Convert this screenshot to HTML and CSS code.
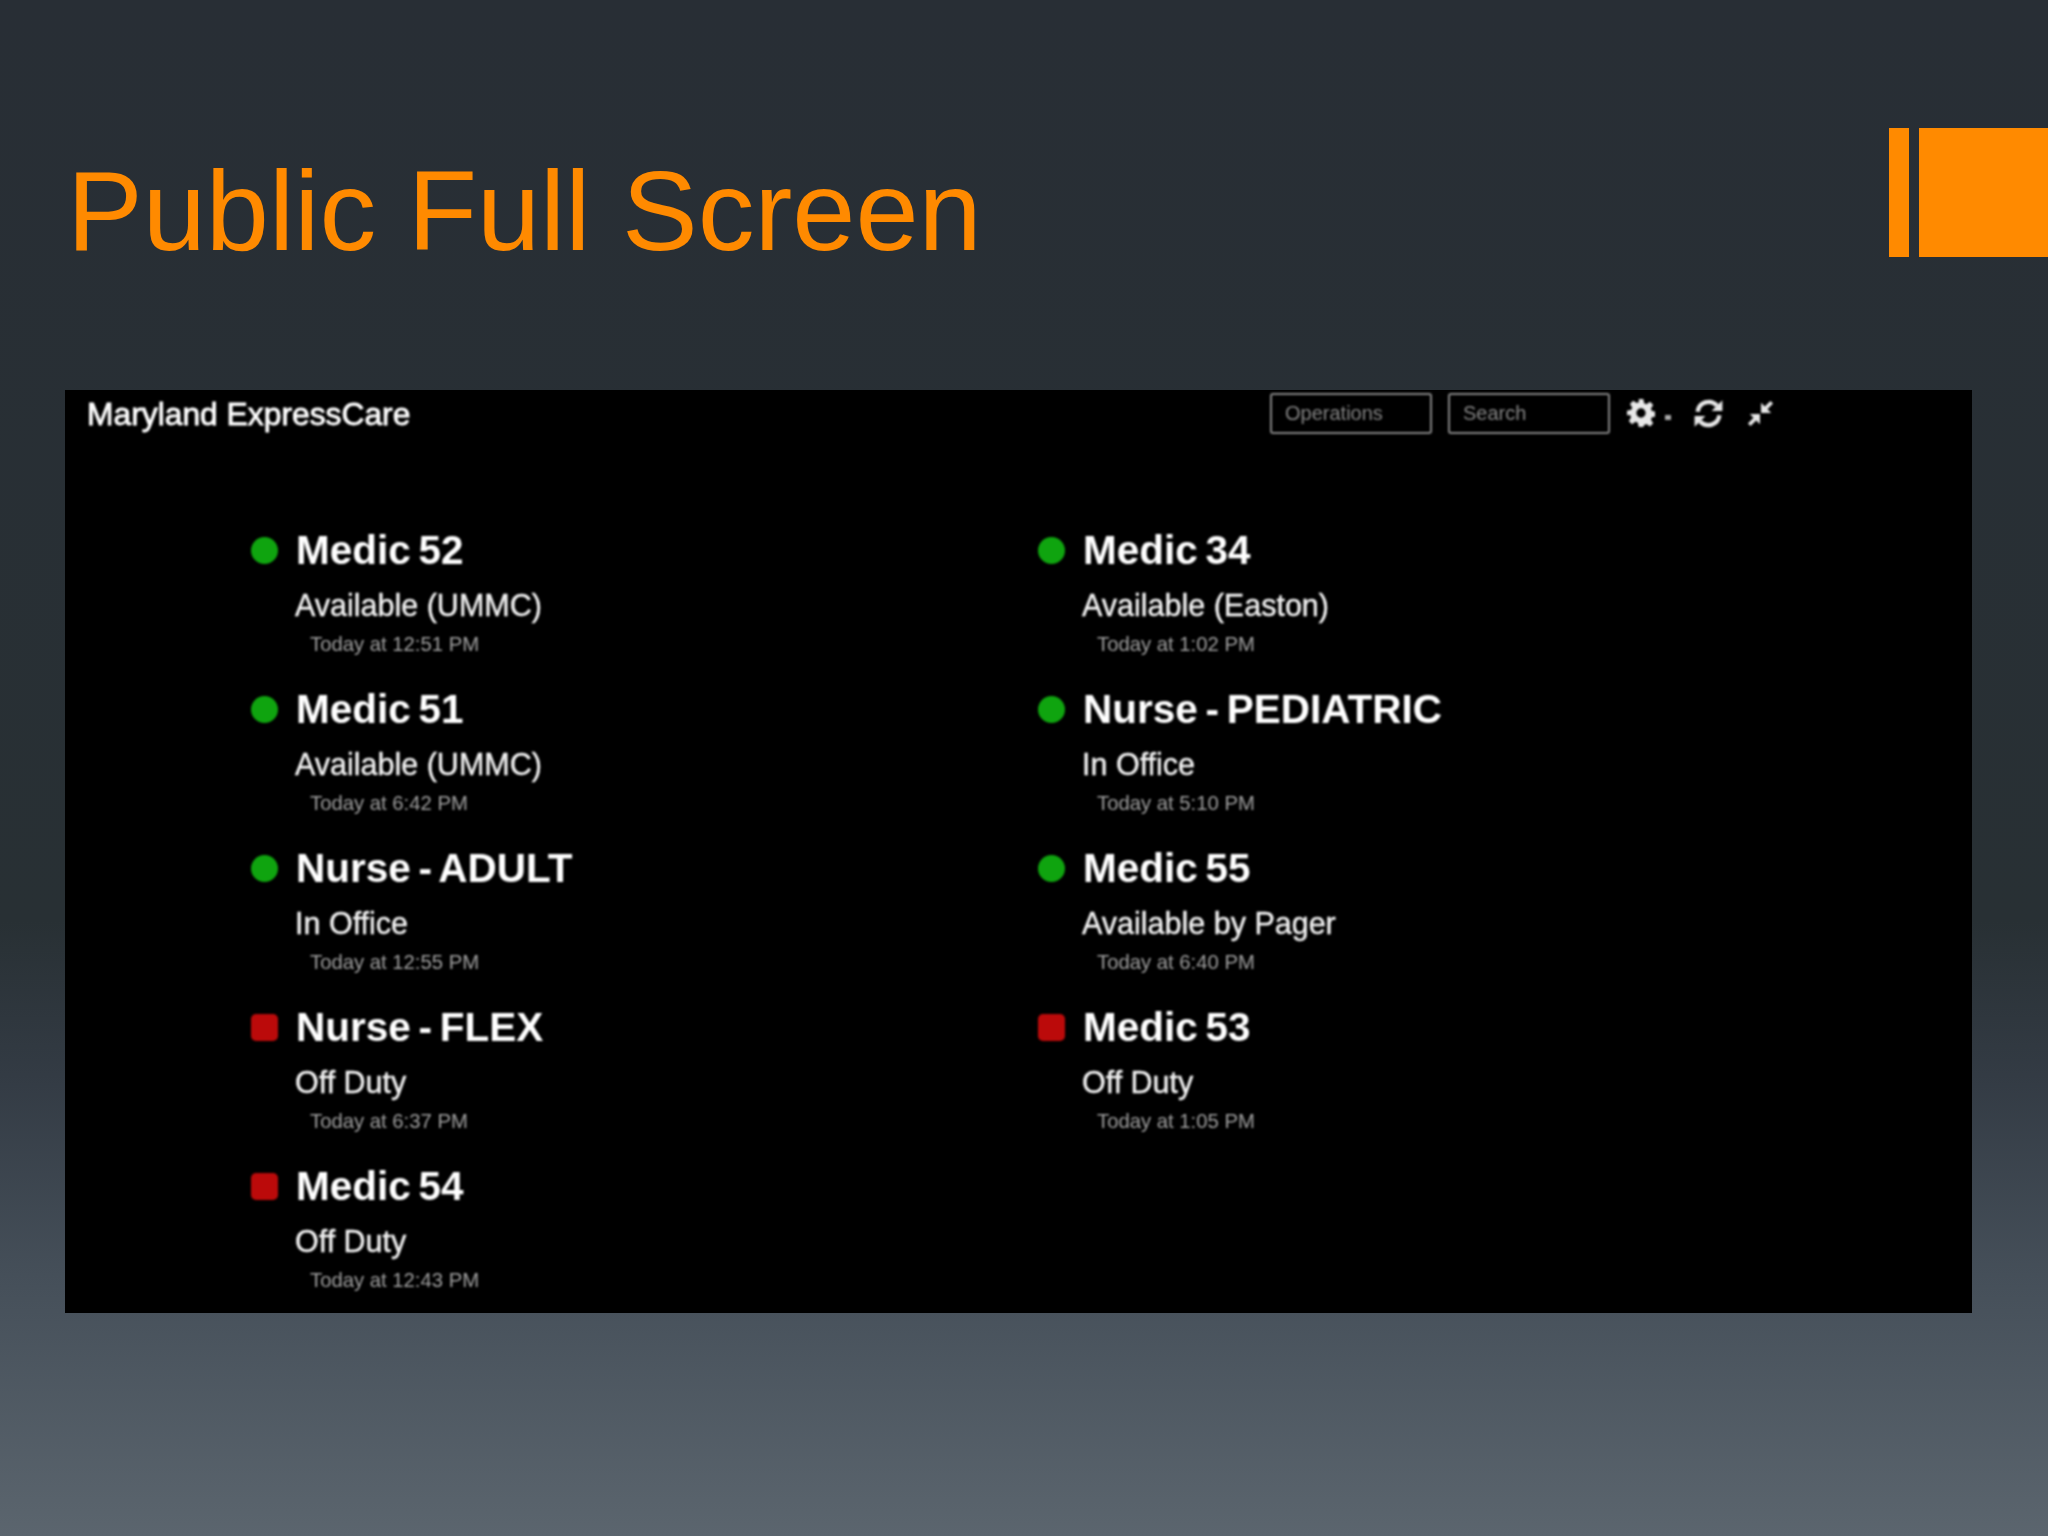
FILE: index.html
```html
<!DOCTYPE html>
<html lang="en">
<head>
  <meta charset="UTF-8" />
  <title>Public Full Screen</title>
  <link rel="stylesheet" href="styles.css">
</head>
<body>
  <header class="slide-head">
    <h1>Public Full Screen</h1>
    <div class="accent">
      <span class="accent-bar"></span>
      <span class="accent-block"></span>
    </div>
  </header>

  <section class="panel">
    <div class="topbar">
      <div class="brand">Maryland ExpressCare</div>
      <div class="tools">
        <div class="field">Operations</div>
        <div class="field">Search</div>
        <svg class="icon icon-gear" viewBox="0 0 24 24">
          <path d="M10 0h4l.7 3.6 2 .8 3-2 2.8 2.8-2 3 .8 2 3.7.8v4l-3.7.7-.8 2 2 3-2.8 2.8-3-2-2 .8L14 24h-4l-.7-3.6-2-.8-3 2-2.8-2.8 2-3-.8-2L0 14v-4l3.7-.8.8-2-2-3 2.8-2.8 3 2 2-.8zM12 8a4 4 0 1 0 0 8 4 4 0 0 0 0-8z" fill-rule="evenodd"/>
        </svg>
        <span class="caret"></span>
        <svg class="icon icon-refresh" viewBox="0 0 24 24">
          <path d="M3 10.5A9.2 9.2 0 0 1 19 5.5M21 13.5A9.2 9.2 0 0 1 5 18.5" fill="none" stroke-width="3.6"/>
          <path d="M23.5 1v9h-9zM.5 23v-9h9z"/>
        </svg>
        <svg class="icon icon-compress" viewBox="0 0 24 24">
          <path d="M2 22l7-7M15 9l7-7" fill="none" stroke-width="3.4"/>
          <path d="M12.5 11.5v-9l9 9zM11.5 12.5v9l-9-9z"/>
        </svg>
      </div>
    </div>

    <div class="board">
      <div class="col">
        <div class="unit">
          <div class="unit-name"><span class="dot dot-on"></span>Medic 52</div>
          <div class="unit-status">Available (UMMC)</div>
          <div class="unit-time">Today at 12:51 PM</div>
        </div>
        <div class="unit">
          <div class="unit-name"><span class="dot dot-on"></span>Medic 51</div>
          <div class="unit-status">Available (UMMC)</div>
          <div class="unit-time">Today at 6:42 PM</div>
        </div>
        <div class="unit">
          <div class="unit-name"><span class="dot dot-on"></span>Nurse - ADULT</div>
          <div class="unit-status">In Office</div>
          <div class="unit-time">Today at 12:55 PM</div>
        </div>
        <div class="unit">
          <div class="unit-name"><span class="dot dot-off"></span>Nurse - FLEX</div>
          <div class="unit-status">Off Duty</div>
          <div class="unit-time">Today at 6:37 PM</div>
        </div>
        <div class="unit">
          <div class="unit-name"><span class="dot dot-off"></span>Medic 54</div>
          <div class="unit-status">Off Duty</div>
          <div class="unit-time">Today at 12:43 PM</div>
        </div>
      </div>
      <div class="col">
        <div class="unit">
          <div class="unit-name"><span class="dot dot-on"></span>Medic 34</div>
          <div class="unit-status">Available (Easton)</div>
          <div class="unit-time">Today at 1:02 PM</div>
        </div>
        <div class="unit">
          <div class="unit-name"><span class="dot dot-on"></span>Nurse - PEDIATRIC</div>
          <div class="unit-status">In Office</div>
          <div class="unit-time">Today at 5:10 PM</div>
        </div>
        <div class="unit">
          <div class="unit-name"><span class="dot dot-on"></span>Medic 55</div>
          <div class="unit-status">Available by Pager</div>
          <div class="unit-time">Today at 6:40 PM</div>
        </div>
        <div class="unit">
          <div class="unit-name"><span class="dot dot-off"></span>Medic 53</div>
          <div class="unit-status">Off Duty</div>
          <div class="unit-time">Today at 1:05 PM</div>
        </div>
      </div>
    </div>
  </section>
</body>
</html>
```

FILE: styles.css
```css
html, body {
  margin: 0;
  padding: 0;
}
body {
  width: 2048px;
  height: 1536px;
  overflow: hidden;
  font-family: "Liberation Sans", Arial, sans-serif;
  background: linear-gradient(to bottom, #282e35 0%, #283034 60%, #333b44 70%, #454f59 83%, #5b656e 100%);
}
.slide-head {
  display: flex;
  align-items: center;
  height: 129px;
  padding-top: 128px;
}
h1 {
  margin: 35px 0 0 67px;
  font-size: 113.5px;
  font-weight: normal;
  line-height: 129px;
  color: #ff8a00;
}
.accent {
  display: flex;
  gap: 10px;
  margin-left: auto;
  height: 129px;
}
.accent-bar {
  width: 20px;
  background: #ff8a00;
}
.accent-block {
  width: 129px;
  background: #ff8a00;
}

/* the embedded screenshot */
.panel {
  width: 1907px;
  height: 923px;
  margin: 133px 0 0 65px;
  background: #000;
  overflow: hidden;
}
.topbar {
  display: flex;
  align-items: center;
  height: 46px;
  padding: 0 0 0 22px;
  filter: blur(0.8px);
}
.brand {
  width: 324px;
  margin-top: 2px;
  font-size: 31.8px;
  white-space: nowrap;
  color: #fff;
  -webkit-text-stroke: 0.8px #fff;
}
.tools {
  display: flex;
  align-items: center;
  margin-left: 859px;
}
.field {
  box-sizing: border-box;
  width: 162px;
  height: 41px;
  margin-right: 16px;
  padding-left: 13px;
  border: 2px solid #858585;
  border-radius: 3px;
  font-size: 20px;
  line-height: 37px;
  color: #858585;
}
.icon {
  fill: #e8e8e8;
  stroke: #e8e8e8;
  stroke-width: 0;
}
.icon-gear {
  width: 28px;
  height: 28px;
  margin-left: 1px;
}
.caret {
  width: 6px;
  height: 5px;
  margin: 8px 0 0 10px;
  background: #aaa;
}
.icon-refresh {
  width: 29px;
  height: 29px;
  margin-left: 23px;
}
.icon-compress {
  width: 27px;
  height: 27px;
  margin-left: 24px;
}

.board {
  display: flex;
  padding: 91px 0 0 186px;
  filter: blur(0.9px);
}
.col {
  width: 787px;
}
.unit {
  height: 159px;
}
.unit-name {
  display: flex;
  align-items: center;
  height: 46px;
  font-size: 40.5px;
  font-weight: bold;
  word-spacing: -3.5px;
  color: #fff;
}
.dot {
  width: 27px;
  height: 27px;
  margin-right: 18px;
  flex: none;
}
.dot-on {
  border-radius: 50%;
  background: #0fa40f;
}
.dot-off {
  border-radius: 5px;
  background: #bb0a0a;
}
.unit-status {
  margin: 14px 0 0 44px;
  font-size: 30.5px;
  line-height: 36px;
  color: #f2f2f2;
  -webkit-text-stroke: 0.4px #f2f2f2;
}
.unit-time {
  margin: 8px 0 0 59px;
  font-size: 20.3px;
  line-height: 26px;
  color: #a0a0a0;
}
```
